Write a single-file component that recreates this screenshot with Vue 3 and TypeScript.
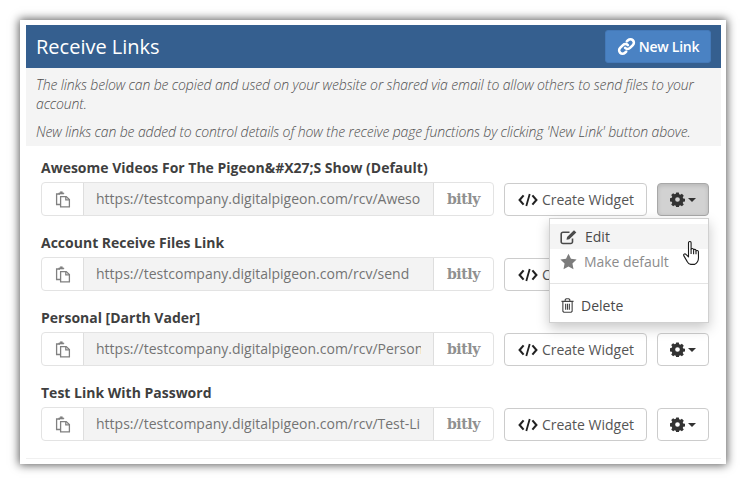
<script setup lang="ts">
interface LinkRow { title: string; url: string; open?: boolean }
const rows: LinkRow[] = [
  { title: 'Awesome Videos For The Pigeon&#X27;S Show (Default)', url: 'https://testcompany.digitalpigeon.com/rcv/Aweso', open: true },
  { title: 'Account Receive Files Link', url: 'https://testcompany.digitalpigeon.com/rcv/send' },
  { title: 'Personal [Darth Vader]', url: 'https://testcompany.digitalpigeon.com/rcv/Person' },
  { title: 'Test Link With Password', url: 'https://testcompany.digitalpigeon.com/rcv/Test-Li' },
]
</script>

<template>
  <div class="page">
    <div class="card">
      <header class="head">
        <h1>Receive Links</h1>
        <button class="new-link">
          <svg class="link-ico" viewBox="0 0 20 20" width="19" height="19" fill="none" stroke="#fff" stroke-width="2.700" stroke-linecap="round">
            <path d="M8.500 11.500a3.600 3.600 0 0 0 5.200 0l3-3a3.600 3.600 0 0 0-5.100-5.100l-1.300 1.300" />
            <path d="M11.500 8.500a3.600 3.600 0 0 0-5.200 0l-3 3a3.600 3.600 0 0 0 5.100 5.100l1.300-1.300" />
          </svg>
          New Link
        </button>
      </header>
      <section class="intro">
        <p class="p1">The links below can be copied and used on your website or shared via email to allow others to send files to your account.</p>
        <p>New links can be added to control details of how the receive page functions by clicking 'New Link' button above.</p>
      </section>
      <section class="list">
        <div v-for="r in rows" :key="r.title" class="row">
          <div class="title">{{ r.title }}</div>
          <div class="controls">
            <div class="group">
              <span class="addon copy">
                <svg viewBox="0 0 16 17" width="16" height="17" fill="none" stroke="#808080" stroke-width="1.300">
                  <path d="M5 3H1.600v10.500H5" />
                  <path d="M3.800 3V1.900h1.400V.8h2.200v1.100h1.400V3z" fill="#808080" stroke-width=".6" />
                  <path d="M5.600 5.600h5.600l3.200 3v7.200H5.600z" />
                  <path d="M10.800 5.800v3h3.300" />
                </svg>
              </span>
              <span class="url"><span class="url-text">{{ r.url }}</span></span>
              <span class="addon bitly">bitly</span>
            </div>
            <button class="btn widget">
              <svg viewBox="0 0 20 14" width="20" height="14" fill="none" stroke="#222" stroke-width="2.100">
                <path d="M5.600 2.400 1.600 7l4 4.600M14.400 2.400l4 4.600-4 4.600" />
                <path d="M11.700 1 8.300 13" stroke-width="1.800" />
              </svg>
              Create Widget
            </button>
            <div class="menu-wrap">
              <button class="btn gear" :class="{ active: r.open }">
                <svg viewBox="0 0 16 16" width="15" height="15" fill="#333">
                  <path fill-rule="evenodd" d="M6.600.5h2.800l.4 2 1.200.5 1.700-1.100 2 2-1.100 1.700.5 1.200 2 .4v2.800l-2 .4-.5 1.200 1.100 1.700-2 2-1.700-1.100-1.200.5-.4 2H6.600l-.4-2-1.200-.5-1.700 1.100-2-2 1.100-1.700-.5-1.200-2-.4V6.600l2-.4.5-1.200L1.300 3.300l2-2L5 2.400l1.200-.5zM8 5.500a2.500 2.500 0 1 0 0 5 2.500 2.500 0 0 0 0-5z" />
                </svg>
                <i class="caret"></i>
              </button>
              <div v-if="r.open" class="menu">
                <div class="item hover">
                  <svg viewBox="0 0 18 16" width="18" height="16" fill="none" stroke="#4a4a4a" stroke-width="1.600">
                    <path d="M12.500 9.500v3.200a1.800 1.800 0 0 1-1.800 1.800H3a1.800 1.800 0 0 1-1.800-1.800V5A1.800 1.800 0 0 1 3 3.200h6.500" />
                    <path d="M6.500 10.800l.6-2.800L14 1.200l2.300 2.200-7 6.800z" fill="#4a4a4a" stroke="none" />
                  </svg>
                  <span class="edit-label">Edit</span>
                </div>
                <div class="item muted">
                  <svg viewBox="0 0 16 16" width="17" height="17" fill="#7c7c7c">
                    <path d="M8 .6l2.300 4.900 5.300.7-3.900 3.700 1 5.300L8 12.600l-4.700 2.600 1-5.300L.4 6.200l5.300-.7z" />
                  </svg>
                  <span class="make-label">Make default</span>
                </div>
                <div class="divider"></div>
                <div class="item delete">
                  <svg viewBox="0 0 14 16" width="13" height="15" fill="none" stroke="#444" stroke-width="1.200">
                    <path d="M.5 3.500h13M4.500 3.500V1.800l1-1h3l1 1v1.700M2 3.500v10.700l1 1h8l1-1V3.500M5 6v6.500M7 6v6.500M9 6v6.500" />
                  </svg>
                  <span class="delete-label">Delete</span>
                </div>
              </div>
            </div>
          </div>
        </div>
      </section>
    </div>
    <svg class="cursor" viewBox="0 0 18 24" width="18" height="24" fill="#fff" stroke="#1c1c1c" stroke-width="1.100" stroke-linejoin="round">
      <path d="M5.500 1.800c0-1.700 2.600-1.700 2.600 0v6.700c.2-1.300 2.300-1.300 2.500.1v.6c.2-1.200 2.300-1.100 2.400.2v.8c.3-1.100 2.300-1 2.400.3l.1 6c0 3.300-1.700 5.900-4.100 6.900H7.800c-1.900-.3-3-1.700-3.700-3L.9 14.900c-.9-1.500.9-2.800 2.100-1.500l2.500 2.500z" />
      <path d="M8.100 8.500v4.500M10.600 9.200v4M13 10.200v3" fill="none" />
    </svg>
  </div>
</template>

<style>
html, body { margin: 0; background: #fff; }
</style>

<style scoped>
.page {
  position: relative;
  width: 744px;
  height: 484px;
  overflow: hidden;
  padding: 20px 18px 20px 20px;
  box-sizing: border-box;
  font-family: "Open Sans", "Noto Sans", sans-serif;
  color: #333;
}
.card {
  height: 444px;
  box-sizing: border-box;
  background: #fff;
  padding: 5px 5px 5px 6px;
  box-shadow: 0 0 9px 1px rgba(0, 0, 0, 0.65);
  display: flex;
  flex-direction: column;
}
.head {
  height: 43px;
  flex: none;
  background: #355f8f;
  display: flex;
  align-items: center;
  justify-content: space-between;
  padding: 0 10px 0 10px;
}
h1 {
  margin: 0;
  font-size: 20px;
  font-weight: 400;
  color: #fff;
  line-height: 27px;
}
.new-link {
  height: 33px;
  width: 106px;
  padding: 0;
  background: #4a82c3;
  border: 1px solid #4479b8;
  border-radius: 3px;
  color: #fff;
  font: 600 14px "Open Sans", sans-serif;
  letter-spacing: -0.25px;
  display: flex;
  align-items: center;
  justify-content: center;
  gap: 3px;
}
.intro {
  flex: none;
  height: 78px;
  box-sizing: border-box;
  background: #f4f4f4;
  padding: 7px 10px 0;
  font-size: 14px;
  line-height: 19px;
  font-style: italic;
  font-weight: 300;
  letter-spacing: -0.13px;
  color: #4f4f4f;
}
.intro p { margin: 0; }
.intro .p1 { margin-bottom: 9px; }
.list {
  flex: 1;
  padding: 12px 12px 0 15px;
  border-bottom: 1px solid #f0f0f0;
}
.row { height: 75px; }
.title {
  font-size: 14px;
  font-weight: 700;
  line-height: 19px;
  height: 24px;
  color: #3f3f3f;
  white-space: nowrap;
}
.controls {
  display: flex;
  align-items: flex-start;
}
.group {
  width: 453px;
  height: 34px;
  box-sizing: border-box;
  border: 1px solid #e3e3e3;
  border-radius: 4px;
  display: flex;
  margin-right: 10px;
  overflow: hidden;
}
.addon {
  flex: none;
  display: flex;
  align-items: center;
  justify-content: center;
}
.copy { width: 41px; border-right: 1px solid #dedede; }
.url {
  flex: 1;
  min-width: 0;
  background: #f3f3f3;
  font-size: 14px;
  line-height: 32px;
  padding: 0 12px;
  color: #737373;
  overflow: hidden;
  white-space: nowrap;
}
.url-text {
  display: block;
  overflow: hidden;
}
.bitly {
  width: 59px;
  border-left: 1px solid #dedede;
  font-family: "DejaVu Serif", serif;
  font-weight: 700;
  font-size: 14px;
  letter-spacing: -0.4px;
  color: #909090;
}
.btn {
  background: #fff;
  border: 1px solid #ccc;
  border-radius: 4px;
  height: 33px;
  margin-top: 1px;
  box-sizing: border-box;
  font: 400 14px "Open Sans", sans-serif;
  color: #555;
  display: flex;
  align-items: center;
  justify-content: center;
  padding: 0;
}
.widget { width: 143px; gap: 4px; margin-right: 10px; padding-left: 1px; }
.menu-wrap { position: relative; }
.gear { width: 52px; gap: 3px; }
.gear.active {
  background: #d2d2d2;
  border-color: #a8a8a8;
  box-shadow: inset 0 2px 4px rgba(0, 0, 0, 0.12);
}
.caret {
  width: 0;
  height: 0;
  border-left: 4px solid transparent;
  border-right: 4px solid transparent;
  border-top: 4px solid #333;
}
.menu {
  position: absolute;
  top: 36px;
  right: 0;
  z-index: 2;
  width: 160px;
  height: 105px;
  box-sizing: border-box;
  padding-top: 5px;
  background: #fff;
  border: 1px solid #d0d0d0;
  box-shadow: 0 5px 12px rgba(0, 0, 0, 0.22);
  font-size: 14px;
  color: #4a4a4a;
}
.item {
  height: 25px;
  display: flex;
  align-items: center;
  padding-left: 10px;
}
.item.hover { background: #f4f4f4; }
.edit-label { margin-left: 7px; }
.muted { color: #8c8c8c; }
.make-label { margin-left: 7px; letter-spacing: -0.05px; }
.divider { height: 1px; background: #e4e4e4; margin: 9px 0 8px; }
.delete { height: 26px; padding-left: 11px; }
.delete-label { margin-left: 7px; }
.cursor {
  position: absolute;
  left: 683px;
  top: 241px;
  z-index: 3;
}
</style>
